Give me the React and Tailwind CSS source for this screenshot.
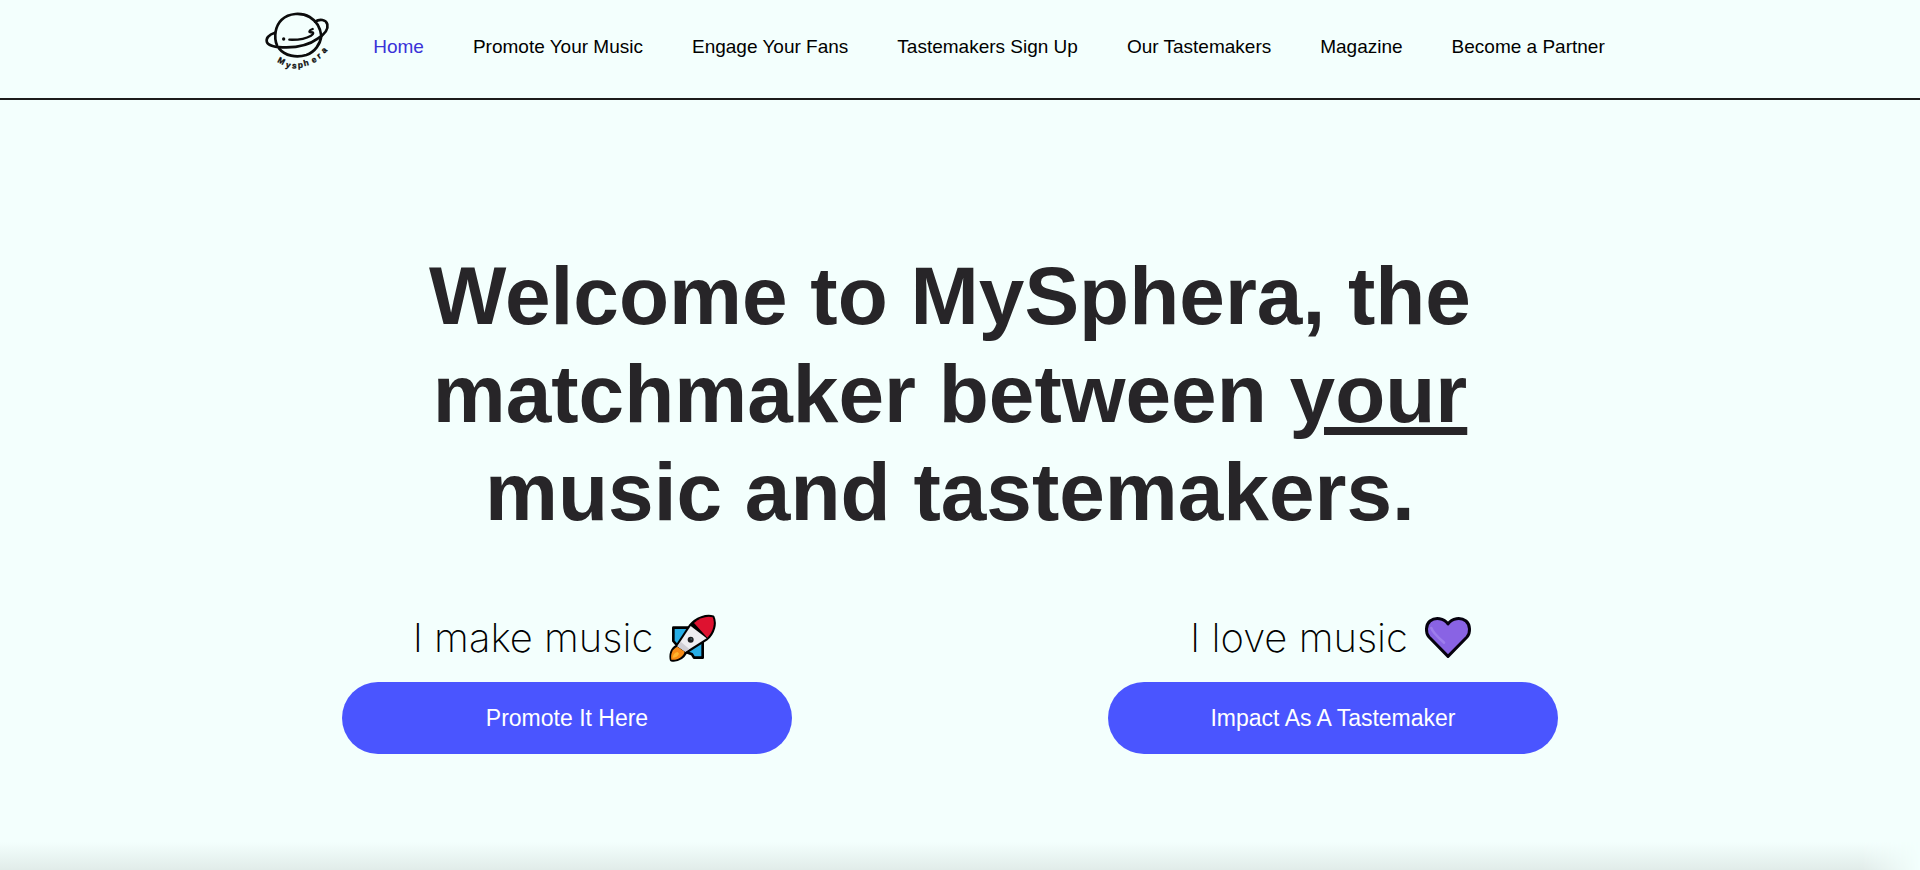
const NAV_LINKS = [
  { label: 'Home', active: true },
  { label: 'Promote Your Music' },
  { label: 'Engage Your Fans' },
  { label: 'Tastemakers Sign Up' },
  { label: 'Our Tastemakers' },
  { label: 'Magazine' },
  { label: 'Become a Partner' },
];

function Logo() {
  return (
    <svg viewBox="42 30 204 192" className="h-16 w-[68px]" fill="none" stroke="#0c0c0c" strokeLinecap="round" strokeLinejoin="round" role="img" aria-label="MySphera">
      <path strokeWidth="8" d="M84 136C74 112 78 78 98 59C120 38 158 37 182 51C202 63 214 82 217 108" />
      <path strokeWidth="8" d="M217 108C214 132 198 156 172 165C142 174 108 168 90 145" />
      <path strokeWidth="8" d="M78 98C58 104 50 116 54 127C60 140 84 142 112 142C150 142 182 134 206 116C228 102 238 86 235 73C231 58 212 56 198 65" />
      <circle cx="104" cy="117" r="5" fill="#0c0c0c" stroke="none" />
      <path strokeWidth="7" d="M121 119C148 120 172 115 186 107C196 101 194 96 186 97C179 98 179 91 191 87" />
      {/* one position and one angle per letter, following the curve of the planet */}
      <text
        x="84 109 128 147 166 192 211 226"
        y="185 201 205 204 199 190 177 161"
        rotate="28 16 6 -4 -14 -26 -36 -44"
        fill="#0c0c0c"
        strokeWidth="1"
        fontSize="25"
        fontWeight="700"
        fontFamily="Liberation Sans, sans-serif"
      >
        Mysphera
      </text>
    </svg>
  );
}

function RocketIcon() {
  return (
    <svg viewBox="87 39 144 144" className="size-12" strokeLinejoin="round" aria-hidden="true">
      <path d="M100 80H148L188 120V170H162L156 160L146 156L124 148L100 120Z" fill="#27aee6" stroke="#000" strokeWidth="8" />
      <path d="M110 136L150 75C168 50 202 42 219 48C228 66 222 94 200 114L138 154C130 168 116 180 94 177C90 160 96 142 110 136Z" fill="#000" stroke="#000" strokeWidth="9" />
      <path d="M112 136L152 75L200 112L136 152Z" fill="#eeedf1" />
      <path d="M112 136L122 122L148 144L136 152Z" fill="#cfcdd4" />
      <path d="M162 66C180 49 204 44 218 49C226 66 220 92 202 110Z" fill="#de1230" />
      <path d="M94 176C91 160 97 143 112 137L134 152C130 167 114 178 94 176Z" fill="#f78b16" />
      <path d="M98 170C99 160 105 154 113 153L117 158C114 166 107 170 98 170Z" fill="#ffb52e" />
      <circle cx="152" cy="116" r="9" fill="#1d1d20" />
      <circle cx="154" cy="114" r="3" fill="#44535c" />
    </svg>
  );
}

function HeartIcon() {
  return (
    <svg viewBox="94 42 144 144" className="size-12" strokeLinejoin="round" aria-hidden="true">
      <path d="M166 169L109 111C98 99 99 74 112 63C128 51 154 54 166 72C178 54 204 51 220 63C233 74 234 99 223 111Z" fill="#8963e4" stroke="#06020e" strokeWidth="9" />
      <path d="M116 84C120 98 136 112 154 128" fill="none" stroke="#9d7dec" strokeWidth="8" strokeLinecap="round" />
    </svg>
  );
}

function CallToAction({ title, icon, action }) {
  return (
    <section className="flex w-[450px] flex-col items-center">
      <h2 className="flex h-16 items-center gap-4 pr-1 pb-2 font-['Inter',sans-serif] text-[40px] leading-[56px] font-extralight text-black">
        {title}
        {icon}
      </h2>
      <button type="button" className="mt-2 h-[72px] w-full rounded-full bg-[#4a55ff] text-[23px] text-white">
        {action}
      </button>
    </section>
  );
}

export default function App() {
  return (
    <div className="flex min-h-screen flex-col bg-[#f3fffd] font-['Liberation_Sans',Arial,sans-serif]">
      <header className="flex h-[100px] justify-center border-b-2 border-[#1c1c1c] pr-13">
        <a href="#home" className="mt-[10px] mr-[42px]">
          <Logo />
        </a>
        <nav className="mt-[34px] flex gap-[49px] text-[19px] leading-[26px]">
          {NAV_LINKS.map(link => (
            <a key={link.label} href="#" className={link.active ? 'text-[#3a32d8]' : 'text-black'}>
              {link.label}
            </a>
          ))}
        </nav>
      </header>

      <main className="flex flex-1 flex-col items-center pt-[147px] pr-5">
        <h1 className="text-center text-[82px] leading-[98px] font-bold text-[#272528]">
          <span className="block">Welcome to MySphera, the</span>
          <span className="block">
            matchmaker between <u>your</u>
          </span>
          <span className="block">music and tastemakers.</span>
        </h1>
        <div className="mt-[69px] flex w-full max-w-[1216px] justify-between">
          <CallToAction title="I make music" icon={<RocketIcon />} action="Promote It Here" />
          <CallToAction title="I love music" icon={<HeartIcon />} action="Impact As A Tastemaker" />
        </div>
      </main>

      <div className="h-7 bg-linear-to-b from-[#f3fffd] to-[#e1ece9] mask-r-from-97%" />
    </div>
  );
}
